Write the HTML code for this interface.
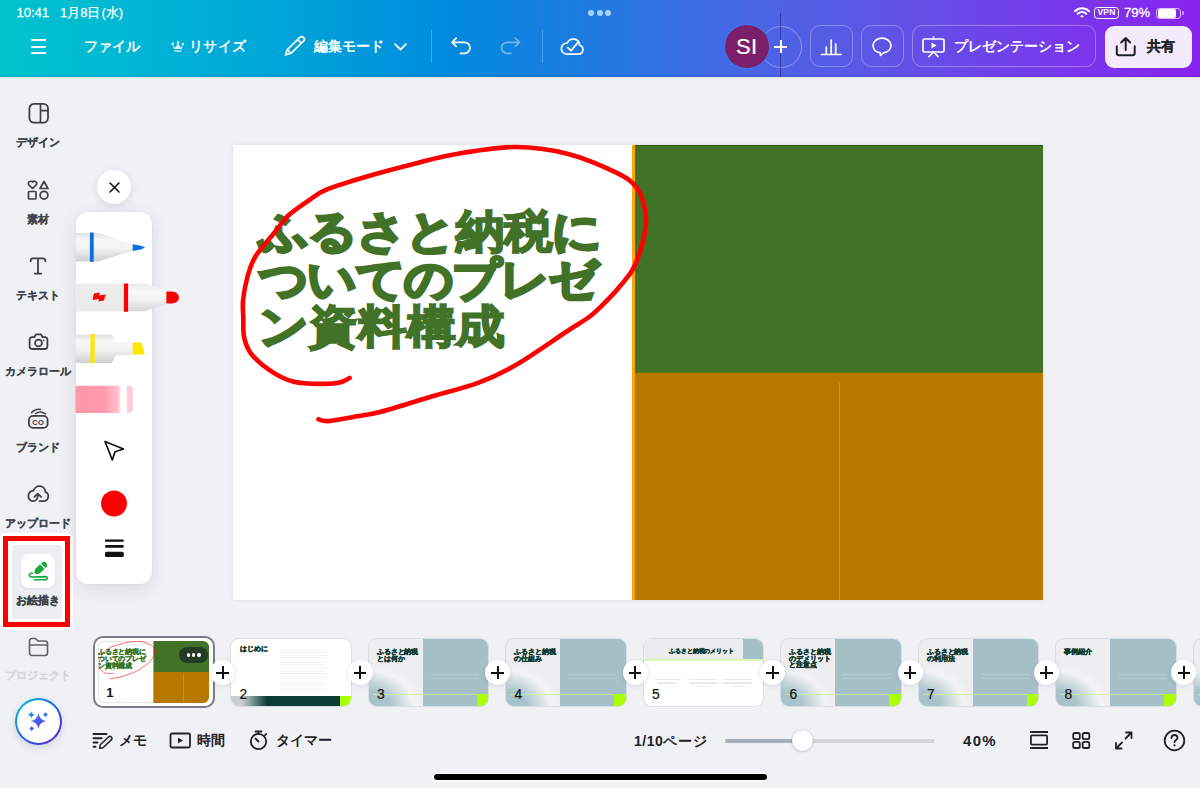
<!DOCTYPE html>
<html><head><meta charset="utf-8">
<style>
*{box-sizing:border-box;margin:0;padding:0}
html,body{width:1200px;height:788px;overflow:hidden}
body{position:relative;background:#f0f1f5;font-family:"Liberation Sans",sans-serif;color:#1f2328}
.a{position:absolute}
svg{position:absolute;overflow:visible}
#hdr{left:0;top:0;width:1200px;height:77px;box-shadow:inset 0 -2px 0 rgba(20,0,60,.07),0 1px 2px rgba(0,0,0,.05);background:linear-gradient(90deg,#00c4cc 0%,#00b4d6 12.5%,#00a2d8 25%,#008ade 37.5%,#2279e0 50%,#4866e4 62.5%,#6152e6 75%,#773aeb 87.5%,#8822ee 100%)}
.wt{position:absolute;color:#fff;font-weight:bold;white-space:nowrap;line-height:1}
.sb{position:absolute;left:0;width:76px;text-align:center;font-size:11px;font-weight:bold;color:#40454c;-webkit-text-stroke:.2px currentColor;white-space:nowrap;line-height:1}
.kj{-webkit-text-stroke:2px #427128}
.hbtn{position:absolute;top:25px;height:42px;border:1.6px solid rgba(255,255,255,.3);border-radius:10px}
</style></head><body>
<!-- HEADER -->
<div id="hdr" class="a">
  <div class="wt" style="left:16.5px;top:6px;font-size:13px;font-weight:normal;-webkit-text-stroke:.3px #fff">10:41</div>
  <div class="wt" style="left:60px;top:6px;font-size:13px;font-weight:normal;-webkit-text-stroke:.25px #fff">1月8日<span style="margin-left:1px">(水)</span></div>
  <!-- dots -->
  <div class="a" style="left:588px;top:9.5px;width:6.2px;height:6.2px;border-radius:50%;background:rgba(200,232,255,.8)"></div>
  <div class="a" style="left:596.9px;top:9.5px;width:6.2px;height:6.2px;border-radius:50%;background:rgba(200,232,255,.8)"></div>
  <div class="a" style="left:605.3px;top:9.5px;width:6.2px;height:6.2px;border-radius:50%;background:rgba(200,232,255,.8)"></div>
  <!-- status right -->
  <svg style="left:1074px;top:7px" width="16" height="11" viewBox="0 0 16 11"><path d="M1 4.2A10 10 0 0 1 15 4.2" fill="none" stroke="#fff" stroke-width="2" stroke-linecap="round"/><path d="M3.8 6.8A6 6 0 0 1 12.2 6.8" fill="none" stroke="#fff" stroke-width="2" stroke-linecap="round"/><path d="M6.2 9.2 8 10.8 9.8 9.2A2.6 2.6 0 0 0 6.2 9.2Z" fill="#fff"/></svg>
  <div class="a" style="left:1094px;top:7px;width:25px;height:12px;border:1.6px solid #fff;border-radius:3.5px;font-size:8.5px;font-weight:bold;color:#fff;text-align:center;line-height:9px;letter-spacing:.2px">VPN</div>
  <div class="wt" style="left:1124px;top:6px;font-size:13px;font-weight:normal;-webkit-text-stroke:.3px #fff">79%</div>
  <div class="a" style="left:1156px;top:7.5px;width:25px;height:11.5px;border:1.4px solid rgba(255,255,255,.7);border-radius:3.5px"></div>
  <div class="a" style="left:1158px;top:9px;width:17.5px;height:8.5px;background:#fff;border-radius:2px"></div>
  <div class="a" style="left:1182px;top:11px;width:2px;height:4px;background:rgba(255,255,255,.5);border-radius:0 1px 1px 0"></div>

  <!-- hamburger -->
  <div class="a" style="left:31px;top:39px;width:15px;height:2px;background:#fff"></div>
  <div class="a" style="left:31px;top:45.5px;width:15px;height:2px;background:#fff"></div>
  <div class="a" style="left:31px;top:52px;width:15px;height:2px;background:#fff"></div>
  <div class="wt" style="left:84px;top:39px;font-size:14px">ファイル</div>
  <svg style="left:166px;top:36px" width="24" height="22" viewBox="0 0 24 22"><circle cx="6.7" cy="7.9" r="1.3" fill="#d8f0ff"/><circle cx="12" cy="6.5" r="1.3" fill="#d8f0ff"/><circle cx="16.9" cy="8.1" r="1.3" fill="#d8f0ff"/><path d="M6.6 8.4 9.2 11.8 12 7 14.8 11.8 17 8.6 15.9 13H8.1Z" fill="#d8f0ff"/><rect x="8.4" y="14.3" width="7.2" height="1.5" fill="#c8e8fa"/></svg>
  <div class="wt" style="left:189px;top:39px;font-size:14px;letter-spacing:.4px">リサイズ</div>
  <svg style="left:280px;top:32px" width="30" height="30" viewBox="0 0 30 30"><g transform="translate(5.4 23) rotate(-43.9)"><path d="M0 0 5.2-2.6H22.6A2.6 2.6 0 0 1 22.6 2.6H5.2Z M5.2-2.6V2.6 M19.6-2.6V2.6" fill="none" stroke="#fff" stroke-width="1.7" stroke-linejoin="round"/></g></svg>
  <div class="wt" style="left:314px;top:39px;font-size:14px">編集モード</div>
  <svg style="left:394px;top:43px" width="13" height="8" viewBox="0 0 13 8"><path d="M1 1.2 6.5 6.5 12 1.2" fill="none" stroke="#fff" stroke-width="1.8" stroke-linecap="round" stroke-linejoin="round"/></svg>
  <div class="a" style="left:431px;top:30px;width:1px;height:33px;background:rgba(255,255,255,.25)"></div>
  <svg style="left:450px;top:37px" width="22" height="18" viewBox="0 0 22 18"><path d="M6.2 1.2 2 5.3 6.2 9.4 M2 5.3H14.5A5.5 5.5 0 0 1 14.5 16.3H10.5" fill="none" stroke="#fff" stroke-width="1.8" stroke-linecap="round" stroke-linejoin="round"/></svg>
  <svg style="left:499px;top:37px" width="22" height="18" viewBox="0 0 22 18"><path d="M16.3 1.2 20.5 5.3 16.3 9.4 M20.5 5.3H8A5.5 5.5 0 0 0 8 16.3H12" fill="none" stroke="rgba(255,255,255,.4)" stroke-width="1.8" stroke-linecap="round" stroke-linejoin="round"/></svg>
  <div class="a" style="left:542px;top:30px;width:1px;height:33px;background:rgba(255,255,255,.25)"></div>
  <svg style="left:559px;top:36px" width="26" height="20" viewBox="0 0 26 20"><path d="M7.6 18.2A5.6 5.6 0 0 1 8.3 7A6.4 6.4 0 0 1 20.6 9.2A4.6 4.6 0 0 1 19.6 18.2Z" fill="none" stroke="#fff" stroke-width="1.7" stroke-linejoin="round"/><path d="M8.8 11.6 12 14.6 19.6 5.6" fill="none" stroke="#fff" stroke-width="1.7" stroke-linecap="round" stroke-linejoin="round"/></svg>

  <!-- right -->
  <div class="a" style="left:760px;top:25.5px;width:42px;height:42px;border-radius:50%;border:1.5px solid rgba(255,255,255,.35)"></div>
  <div class="a" style="left:780.3px;top:13px;width:1px;height:64px;background:rgba(20,20,110,.5)"></div>
  <div class="a" style="left:725px;top:24.8px;width:43.5px;height:43.5px;border-radius:50%;background:#7b1f6b;box-shadow:0 0 0 1px #3d78f2;color:#fff;font-size:22px;-webkit-text-stroke:.2px #fff;text-align:center;line-height:43.5px;letter-spacing:.3px">SI</div>
  <div class="a" style="left:774px;top:45.6px;width:13px;height:2px;background:#fff"></div>
  <div class="a" style="left:779.5px;top:40.1px;width:2px;height:13px;background:#fff"></div>
  <div class="hbtn" style="left:810px;width:43px"></div>
  <svg style="left:820px;top:36px" width="22" height="20" viewBox="0 0 22 20"><path d="M1.5 18.5H21 M6.3 17.5V11 M11.2 17.5V4 M15.7 17.5V8" fill="none" stroke="#fff" stroke-width="1.7" stroke-linecap="round"/></svg>
  <div class="hbtn" style="left:861px;width:43px"></div>
  <svg style="left:871px;top:36px" width="22" height="21" viewBox="0 0 22 21"><path d="M11 2.2C5.9 2.2 2 5.5 2 9.6 2 13.3 5 16.3 9.2 16.9L9.4 19.4 12.6 16.9C16.9 16.3 20 13.3 20 9.6 20 5.5 16.1 2.2 11 2.2Z" fill="none" stroke="#fff" stroke-width="1.7" stroke-linejoin="round"/></svg>
  <div class="hbtn" style="left:912px;width:184px"></div>
  <svg style="left:921px;top:36px" width="25" height="22" viewBox="0 0 25 22"><rect x="2" y="3" width="21" height="13" rx="1.5" fill="none" stroke="#fff" stroke-width="1.7"/><path d="M12.5 1V3 M12.5 16 8 20.5 M12.5 16 17 20.5" fill="none" stroke="#fff" stroke-width="1.7" stroke-linecap="round"/><path d="M10.5 6.5V12.5L15.5 9.5Z" fill="#fff"/></svg>
  <div class="wt" style="left:954px;top:39px;font-size:14px">プレゼンテーション</div>
  <div class="a" style="left:1104.5px;top:25.5px;width:87.3px;height:42px;border-radius:9px;background:#f3ebfc"></div>
  <svg style="left:1114px;top:37px" width="23" height="20" viewBox="0 0 23 20"><path d="M11.7 13V1.2 M7.2 5.5 11.7 1 16.2 5.5 M2.8 9.3V16A2.2 2.2 0 0 0 5 18.2H18.5A2.2 2.2 0 0 0 20.7 16V9.3" fill="none" stroke="#1f2328" stroke-width="2" stroke-linecap="round" stroke-linejoin="round"/></svg>
  <div class="wt" style="left:1147px;top:39px;font-size:14px;color:#1f2328;-webkit-text-stroke:.3px #1f2328">共有</div>
</div>


<!-- SLIDE -->
<div class="a" style="left:233px;top:145px;width:810px;height:455px;background:#fff;box-shadow:0 0 1px rgba(0,0,0,.12),0 0 6px rgba(0,0,0,.05)"></div>
<div class="a" style="left:632px;top:145px;width:3px;height:455px;background:#ffa500"></div>
<div class="a" style="left:635px;top:145px;width:408px;height:227px;background:#427128;border-top:1.5px solid #1e6404"></div>
<div class="a" style="left:635px;top:371.5px;width:408px;height:1.2px;background:#5e7418"></div>
<div class="a" style="left:635px;top:372.7px;width:408px;height:227.3px;background:#b87800"></div>
<div class="a" style="left:838.5px;top:383px;width:1.5px;height:217px;background:#c99434"></div>
<div class="a" id="ttl" style="left:259px;top:208px;font-size:45px;line-height:47.5px;font-weight:bold;color:#427128;-webkit-text-stroke:3px #427128;white-space:nowrap;transform:scaleX(1.08);transform-origin:0 0"><div style="letter-spacing:-.5px">ふるさと<span class="kj">納税</span>に</div><div style="letter-spacing:-1.3px">ついてのプレゼ</div><div style="letter-spacing:.3px">ン<span class="kj">資料構成</span></div></div>
<svg style="left:0;top:0" width="1200" height="788" viewBox="0 0 1200 788"><path d="M318.4 419.3C320.1 419.6 322.9 421.5 328.5 421.1C334.1 420.8 343.7 418.7 352.3 417.2C360.9 415.7 367.6 415.2 380.0 412.0C392.4 408.8 410.4 402.9 426.7 398.0C443.0 393.1 463.2 388.2 478.0 382.8C492.8 377.4 500.5 373.9 515.3 365.3C530.1 356.8 554.2 339.7 566.7 331.5C579.2 323.3 583.2 321.6 590.0 316.3C596.8 311.1 602.3 305.2 607.5 300.0C612.7 294.8 616.5 290.7 621.0 285.0C625.5 279.3 630.5 274.8 634.5 266.0C638.5 257.2 643.2 241.7 645.0 232.3C646.8 222.9 646.4 217.3 645.0 209.8C643.6 202.3 641.3 193.6 636.4 187.4C631.5 181.2 627.3 178.0 615.8 172.4C604.3 166.8 584.0 157.9 567.2 153.7C550.4 149.5 533.5 146.9 514.8 147.0C496.1 147.1 471.9 151.4 455.0 154.2C438.1 157.0 428.3 160.3 413.6 164.0C398.9 167.7 381.6 172.2 367.0 176.5C352.4 180.8 336.1 185.6 326.3 189.7C316.5 193.8 314.4 196.6 308.0 201.0C301.6 205.4 293.2 210.9 287.8 216.0C282.4 221.1 281.0 224.5 275.6 231.3C270.2 238.1 260.0 248.9 255.3 256.7C250.6 264.5 249.2 270.8 247.2 278.0C245.2 285.2 243.8 293.4 243.1 300.0C242.4 306.6 243.1 311.2 243.3 317.5C243.5 323.8 242.8 331.6 244.2 337.7C245.6 343.8 246.9 348.5 251.5 354.2C256.1 359.9 264.7 367.0 271.7 371.6C278.7 376.2 285.1 379.6 293.7 381.7C302.2 383.8 315.4 383.8 323.0 383.9C330.6 384.0 335.1 383.6 339.5 382.6C343.9 381.6 347.9 378.8 349.6 378.0" fill="none" stroke="#fe0000" stroke-width="4.6" stroke-linecap="round" stroke-linejoin="round"/></svg>
<!-- SIDEBAR -->
<svg style="left:27px;top:102px" width="23" height="22" viewBox="0 0 23 22"><rect x="2.4" y="1.9" width="18.6" height="18.8" rx="4.6" fill="none" stroke="#3b4047" stroke-width="1.8"/><path d="M13.5 1.9V20.7 M13.5 8.6H21" fill="none" stroke="#3b4047" stroke-width="1.7"/></svg>
<div class="sb" style="top:137px">デザイン</div>
<svg style="left:27px;top:180px" width="23" height="20" viewBox="0 0 23 20"><path d="M5.5 8.5 1.8 4.8a2.2 2.2 0 0 1 3.7-2.6 2.2 2.2 0 0 1 3.7 2.6Z" fill="none" stroke="#3b4047" stroke-width="1.7" stroke-linejoin="round"/><path d="M17 1.5 21 8.5H13Z" fill="none" stroke="#3b4047" stroke-width="1.7" stroke-linejoin="round"/><rect x="1.5" y="11.5" width="7.5" height="7.5" rx="1" fill="none" stroke="#3b4047" stroke-width="1.7"/><circle cx="17" cy="15.2" r="3.9" fill="none" stroke="#3b4047" stroke-width="1.7"/></svg>
<div class="sb" style="top:214px">素材</div>
<svg style="left:28px;top:256px" width="20" height="20" viewBox="0 0 20 20"><path d="M2.6 5.2C2.6 3 3.2 2.4 5 2.4H15C16.8 2.4 17.4 3 17.4 5.2 M10 2.4V17.6 M6.8 17.6H13.2" fill="none" stroke="#3b4047" stroke-width="1.8" stroke-linecap="round" stroke-linejoin="round"/></svg>
<div class="sb" style="top:290px">テキスト</div>
<svg style="left:27px;top:332px" width="23" height="20" viewBox="0 0 23 20"><path d="M5 5.2H7.3L9 2.4H14L15.7 5.2H18A2.4 2.4 0 0 1 20.4 7.6V14.6A2.4 2.4 0 0 1 18 17H5A2.4 2.4 0 0 1 2.6 14.6V7.6A2.4 2.4 0 0 1 5 5.2Z" fill="none" stroke="#3b4047" stroke-width="1.8" stroke-linejoin="round"/><circle cx="11.5" cy="11" r="3.4" fill="none" stroke="#3b4047" stroke-width="1.8"/><circle cx="16.6" cy="8.3" r=".9" fill="#3b4047"/></svg>
<div class="sb" style="top:366px">カメラロール</div>
<svg style="left:20px;top:400px" width="36" height="36" viewBox="20 400 36 36"><rect x="28.9" y="415.8" width="18.7" height="12.1" rx="4.2" fill="none" stroke="#3b4047" stroke-width="1.8"/><path d="M31.6 412.6Q35.5 408.4 40.6 409.4M35.6 413.6Q40.6 410.4 45.4 413.9" fill="none" stroke="#3b4047" stroke-width="1.5" stroke-linecap="round"/><text x="38.3" y="424.9" text-anchor="middle" font-family="Liberation Sans" font-weight="bold" font-size="7.6" fill="#3b4047" letter-spacing=".3">CO</text></svg>
<div class="sb" style="top:442px">ブランド</div>
<svg style="left:19px;top:475.5px" width="36" height="36" viewBox="20 476 36 36"><path d="M40.6 501.2H44.4A4.8 4.8 0 0 0 46.4 492A6 6 0 0 0 34.6 490.6A5.4 5.4 0 0 0 33.4 501.2A5.2 5.2 0 0 0 38.7 496.2V493.8M35.4 496.9 38.7 493.6 42.1 496.9" fill="none" stroke="#3b4047" stroke-width="1.8" stroke-linecap="round" stroke-linejoin="round"/></svg>
<div class="sb" style="top:518px">アップロード</div>
<!-- selected draw -->

<div class="a" style="left:0;top:533px;width:73px;height:97px;background:#fff;border-radius:6px"></div><div class="a" style="left:3px;top:536px;width:67px;height:91px;border:5.2px solid #fe0000;background:#fff"></div><div class="a" style="left:12px;top:545px;width:50px;height:74px;border-radius:4px;background:#eceef2"></div>
<div class="a" style="left:21px;top:553.5px;width:34px;height:34px;border-radius:8px;background:#fff;box-shadow:0 1px 3px rgba(0,0,0,.08)"></div>
<svg style="left:22px;top:555px" width="32" height="32" viewBox="0 0 32 32"><g transform="translate(12.6 18.7) rotate(-42.7)"><path d="M0.3 0C0.8-1.5 3-3.2 5-3.2H10.5V3.2H5C3 3.2 0.8 1.5 0.3 0Z" fill="#18a83c"/><path d="M11.8-3.2H12.6A3.2 3.2 0 0 1 12.6 3.2H11.8Z" fill="#18a83c"/></g><path d="M10.4 18.3C8 17.8 6.8 19.2 7.3 20.6C7.7 21.6 9 22 10.5 22L23.6 21.6A1.6 1.6 0 0 1 23.6 24.8H12.6" fill="none" stroke="#18a83c" stroke-width="1.6" stroke-linecap="round" stroke-linejoin="round"/></svg>
<div class="sb" style="top:595px;color:#3b4047">お絵描き</div>
<svg style="left:28px;top:637px" width="21" height="20" viewBox="0 0 21 20"><path d="M1.5 4A2.5 2.5 0 0 1 4 1.5H7.5L10 4H17A2.5 2.5 0 0 1 19.5 6.5V16A2.5 2.5 0 0 1 17 18.5H4A2.5 2.5 0 0 1 1.5 16Z M1.5 8H19.5" fill="none" stroke="#5f646b" stroke-width="1.7" stroke-linejoin="round"/></svg>
<div class="sb" style="top:670px;color:#d5d8dd">プロジェクト</div>
<!-- magic -->
<div class="a" style="left:14.5px;top:697.5px;width:47.5px;height:47.5px;border-radius:50%;background:linear-gradient(135deg,#00b4d4 10%,#1f5fe6 55%,#5a22e0 90%);box-shadow:0 3px 8px rgba(0,0,0,.12)"></div>
<div class="a" style="left:16.75px;top:699.75px;width:43px;height:43px;border-radius:50%;background:#fff"></div>
<svg style="left:10px;top:692px" width="56" height="56" viewBox="0 0 56 56"><defs><linearGradient id="mg" x1="0" y1="0" x2="1" y2="1"><stop offset="0" stop-color="#3c7ee6"/><stop offset="1" stop-color="#5a3cf0"/></linearGradient><linearGradient id="mg2" x1="0" y1="0" x2="1" y2="1"><stop offset="0" stop-color="#0a9bc8"/><stop offset="1" stop-color="#2a7ee0"/></linearGradient></defs><path d="M28.4 21.3Q29.49 28.01 36.199999999999996 29.1Q29.49 30.19 28.4 36.9Q27.31 30.19 20.599999999999998 29.1Q27.31 28.01 28.4 21.3Z" fill="url(#mg)"/><path d="M21.3 19.0Q21.74 22.26 25.0 22.7Q21.74 23.14 21.3 26.4Q20.86 23.14 17.6 22.7Q20.86 22.26 21.3 19.0Z" fill="url(#mg2)"/><path d="M35.5 20.200000000000003Q36.58 21.52 37.9 22.6Q36.58 23.68 35.5 25.0Q34.42 23.68 33.1 22.6Q34.42 21.52 35.5 20.200000000000003Z" fill="#2f6fe6"/><path d="M21.7 34.2Q22.78 35.52 24.099999999999998 36.6Q22.78 37.68 21.7 39.0Q20.62 37.68 19.3 36.6Q20.62 35.52 21.7 34.2Z" fill="#3566ea"/></svg>

<!-- THUMBS -->
<div class="a" style="left:93px;top:636px;width:121.5px;height:72px;border:2px solid #787d85;border-radius:10px;background:#fff"></div>
<div class="a" style="left:97.75px;top:641.25px;width:111px;height:62px;border-radius:6px;overflow:hidden;background:#fff;box-shadow:inset 0 0 0 .8px #dadde3">
<div class="a" style="left:55.25px;top:0;width:56px;height:31px;background:#427128"></div>
<div class="a" style="left:55.25px;top:30.5px;width:56px;height:32px;background:#b87800"></div>
<div class="a" style="left:85.25px;top:32px;width:.5px;height:30px;background:#c0903a"></div>
<div class="a" style="left:54.75px;top:0;width:.6px;height:62px;background:#e0a030"></div>
<div class="a" style="left:0;top:6.5px;font-size:6.6px;line-height:7.2px;font-weight:bold;color:#33741f;-webkit-text-stroke:.3px #33741f;white-space:nowrap;letter-spacing:-.1px">ふるさと納税に<br>ついてのプレゼ<br>ン資料構成</div>
<svg style="left:0;top:0" width="111" height="62" viewBox="0 0 111 62"><g transform="translate(-31.85 -19.82) scale(0.1367)"><path d="M318.4 419.3C320.1 419.6 322.9 421.5 328.5 421.1C334.1 420.8 343.7 418.7 352.3 417.2C360.9 415.7 367.6 415.2 380.0 412.0C392.4 408.8 410.4 402.9 426.7 398.0C443.0 393.1 463.2 388.2 478.0 382.8C492.8 377.4 500.5 373.9 515.3 365.3C530.1 356.8 554.2 339.7 566.7 331.5C579.2 323.3 583.2 321.6 590.0 316.3C596.8 311.1 602.3 305.2 607.5 300.0C612.7 294.8 616.5 290.7 621.0 285.0C625.5 279.3 630.5 274.8 634.5 266.0C638.5 257.2 643.2 241.7 645.0 232.3C646.8 222.9 646.4 217.3 645.0 209.8C643.6 202.3 641.3 193.6 636.4 187.4C631.5 181.2 627.3 178.0 615.8 172.4C604.3 166.8 584.0 157.9 567.2 153.7C550.4 149.5 533.5 146.9 514.8 147.0C496.1 147.1 471.9 151.4 455.0 154.2C438.1 157.0 428.3 160.3 413.6 164.0C398.9 167.7 381.6 172.2 367.0 176.5C352.4 180.8 336.1 185.6 326.3 189.7C316.5 193.8 314.4 196.6 308.0 201.0C301.6 205.4 293.2 210.9 287.8 216.0C282.4 221.1 281.0 224.5 275.6 231.3C270.2 238.1 260.0 248.9 255.3 256.7C250.6 264.5 249.2 270.8 247.2 278.0C245.2 285.2 243.8 293.4 243.1 300.0C242.4 306.6 243.1 311.2 243.3 317.5C243.5 323.8 242.8 331.6 244.2 337.7C245.6 343.8 246.9 348.5 251.5 354.2C256.1 359.9 264.7 367.0 271.7 371.6C278.7 376.2 285.1 379.6 293.7 381.7C302.2 383.8 315.4 383.8 323.0 383.9C330.6 384.0 335.1 383.6 339.5 382.6C343.9 381.6 347.9 378.8 349.6 378.0" fill="none" stroke="#fe0000" stroke-opacity=".7" stroke-width="6"/></g></svg>
<div class="a" style="left:81.25px;top:5.6px;width:29px;height:16.25px;border-radius:8px;background:#233b25"></div>
<div class="a" style="left:88.75px;top:11.9px;width:3.6px;height:3.6px;border-radius:50%;background:#fff"></div>
<div class="a" style="left:94px;top:11.9px;width:3.6px;height:3.6px;border-radius:50%;background:#fff"></div>
<div class="a" style="left:99.25px;top:11.9px;width:3.6px;height:3.6px;border-radius:50%;background:#fff"></div>
<div class="a" style="left:8.5px;top:45px;font-size:13px;font-weight:bold;color:#111;line-height:1">1</div>
</div>
<div class="a" style="left:231.25px;top:638.75px;width:119.5px;height:67.25px;border-radius:8px;overflow:hidden;background:#fff;box-shadow:0 0 0 1px rgba(200,205,215,.55)">
<div class="a" style="left:8.5px;top:7.5px;font-size:6.6px;font-weight:bold;color:#0d3a30;-webkit-text-stroke:.35px #0d3a30;white-space:nowrap;line-height:1">はじめに</div>
<div class="a" style="left:49px;top:11px;width:46px;height:18px;background:repeating-linear-gradient(180deg,rgba(150,155,160,.11) 0 .8px,transparent .8px 2.4px)"></div>
<div class="a" style="left:49px;top:32px;width:46px;height:22px;background:repeating-linear-gradient(180deg,rgba(150,155,160,.11) 0 .8px,transparent .8px 2.4px)"></div>
<div class="a" style="left:0;top:56.75px;width:109px;height:11px;background:linear-gradient(90deg,#c9d1d0 0%,#c9d1d0 10%,#0b3d36 33%,#0b3d36 100%)"></div>
<div class="a" style="left:108.75px;top:56.75px;width:11px;height:11px;background:#aaff00"></div>
<div class="a" style="left:8.3px;top:49.2px;font-size:13.8px;color:#111;line-height:1;-webkit-text-stroke:.2px #111">2</div>
</div>
<div class="a" style="left:368.75px;top:638.75px;width:119.5px;height:67.25px;border-radius:8px;overflow:hidden;background:#eeeef1;box-shadow:0 0 0 1px rgba(200,205,215,.55)"><div class="a" style="left:0;top:0;width:54px;height:68px;background:radial-gradient(ellipse 54px 44px at 0% 100%,#a5c1c7 0%,#a9c4ca 38%,#d2dde0 62%,#f2f3f5 82%,rgba(238,238,241,0) 100%)"></div><div class="a" style="left:53.75px;top:0;width:66px;height:68px;background:#a5c1c7"></div><div class="a" style="left:62px;top:35px;width:48px;height:8px;background:repeating-linear-gradient(180deg,rgba(255,255,255,.16) 0 .8px,transparent .8px 4px)"></div><div class="a" style="left:4px;top:55.5px;width:104px;height:1px;background:rgba(205,240,150,.75)"></div><div class="a" style="left:108px;top:55.25px;width:12px;height:12px;background:#aaff00;border-bottom-right-radius:7px"></div><div class="a" style="left:8.2px;top:10.5px;font-size:6.5px;line-height:6.3px;letter-spacing:-.12px;font-weight:bold;color:#0d3a30;-webkit-text-stroke:.4px #0d3a30;white-space:nowrap">ふるさと納税<br>とは何か</div><div class="a" style="left:8.3px;top:49.2px;font-size:13.8px;color:#111;line-height:1;-webkit-text-stroke:.2px #111">3</div></div>
<div class="a" style="left:506.25px;top:638.75px;width:119.5px;height:67.25px;border-radius:8px;overflow:hidden;background:#eeeef1;box-shadow:0 0 0 1px rgba(200,205,215,.55)"><div class="a" style="left:0;top:0;width:54px;height:68px;background:radial-gradient(ellipse 54px 44px at 0% 100%,#a5c1c7 0%,#a9c4ca 38%,#d2dde0 62%,#f2f3f5 82%,rgba(238,238,241,0) 100%)"></div><div class="a" style="left:53.75px;top:0;width:66px;height:68px;background:#a5c1c7"></div><div class="a" style="left:62px;top:35px;width:48px;height:8px;background:repeating-linear-gradient(180deg,rgba(255,255,255,.16) 0 .8px,transparent .8px 4px)"></div><div class="a" style="left:4px;top:55.5px;width:104px;height:1px;background:rgba(205,240,150,.75)"></div><div class="a" style="left:108px;top:55.25px;width:12px;height:12px;background:#aaff00;border-bottom-right-radius:7px"></div><div class="a" style="left:8.2px;top:10.5px;font-size:6.5px;line-height:6.3px;letter-spacing:-.12px;font-weight:bold;color:#0d3a30;-webkit-text-stroke:.4px #0d3a30;white-space:nowrap">ふるさと納税<br>の仕組み</div><div class="a" style="left:8.3px;top:49.2px;font-size:13.8px;color:#111;line-height:1;-webkit-text-stroke:.2px #111">4</div></div>
<div class="a" style="left:643.75px;top:638.75px;width:119.5px;height:67.25px;border-radius:8px;overflow:hidden;background:#fff;box-shadow:0 0 0 1px rgba(200,205,215,.55)">
<div class="a" style="left:0;top:0;width:120px;height:20.6px;background:#ececee"></div>
<div class="a" style="left:99.25px;top:0;width:21px;height:20.6px;background:#a5c1c7"></div>
<div class="a" style="left:0;top:20.6px;width:120px;height:1.2px;background:#dff5b5"></div>
<div class="a" style="left:25.5px;top:9px;font-size:6.2px;letter-spacing:-.15px;font-weight:bold;color:#0d3a30;-webkit-text-stroke:.35px #0d3a30;white-space:nowrap;line-height:1">ふるさと納税のメリット</div>
<div class="a" style="left:10.25px;top:40px;width:27px;height:1.4px;background:rgba(140,150,150,.2)"></div><div class="a" style="left:13.25px;top:43.5px;width:19px;height:1.4px;background:rgba(140,150,150,.2)"></div><div class="a" style="left:45.25px;top:40px;width:28px;height:1.4px;background:rgba(140,150,150,.2)"></div><div class="a" style="left:45.25px;top:43.5px;width:28px;height:1.4px;background:rgba(140,150,150,.2)"></div><div class="a" style="left:53.25px;top:47px;width:13px;height:1.4px;background:rgba(140,150,150,.2)"></div><div class="a" style="left:79.25px;top:40px;width:29px;height:1.4px;background:rgba(140,150,150,.2)"></div><div class="a" style="left:79.25px;top:43.5px;width:29px;height:1.4px;background:rgba(140,150,150,.2)"></div><div class="a" style="left:87.25px;top:47px;width:14px;height:1.4px;background:rgba(140,150,150,.2)"></div><div class="a" style="left:8.3px;top:49.2px;font-size:13.8px;color:#111;line-height:1;-webkit-text-stroke:.2px #111">5</div>
</div>
<div class="a" style="left:781.25px;top:638.75px;width:119.5px;height:67.25px;border-radius:8px;overflow:hidden;background:#eeeef1;box-shadow:0 0 0 1px rgba(200,205,215,.55)"><div class="a" style="left:0;top:0;width:54px;height:68px;background:radial-gradient(ellipse 54px 44px at 0% 100%,#a5c1c7 0%,#a9c4ca 38%,#d2dde0 62%,#f2f3f5 82%,rgba(238,238,241,0) 100%)"></div><div class="a" style="left:53.75px;top:0;width:66px;height:68px;background:#a5c1c7"></div><div class="a" style="left:62px;top:35px;width:48px;height:8px;background:repeating-linear-gradient(180deg,rgba(255,255,255,.16) 0 .8px,transparent .8px 4px)"></div><div class="a" style="left:4px;top:55.5px;width:104px;height:1px;background:rgba(205,240,150,.75)"></div><div class="a" style="left:108px;top:55.25px;width:12px;height:12px;background:#aaff00;border-bottom-right-radius:7px"></div><div class="a" style="left:8.2px;top:10.5px;font-size:6.5px;line-height:6.3px;letter-spacing:-.12px;font-weight:bold;color:#0d3a30;-webkit-text-stroke:.4px #0d3a30;white-space:nowrap">ふるさと納税<br>のデメリット<br>と注意点</div><div class="a" style="left:8.3px;top:49.2px;font-size:13.8px;color:#111;line-height:1;-webkit-text-stroke:.2px #111">6</div></div>
<div class="a" style="left:918.75px;top:638.75px;width:119.5px;height:67.25px;border-radius:8px;overflow:hidden;background:#eeeef1;box-shadow:0 0 0 1px rgba(200,205,215,.55)"><div class="a" style="left:0;top:0;width:54px;height:68px;background:radial-gradient(ellipse 54px 44px at 0% 100%,#a5c1c7 0%,#a9c4ca 38%,#d2dde0 62%,#f2f3f5 82%,rgba(238,238,241,0) 100%)"></div><div class="a" style="left:53.75px;top:0;width:66px;height:68px;background:#a5c1c7"></div><div class="a" style="left:62px;top:35px;width:48px;height:8px;background:repeating-linear-gradient(180deg,rgba(255,255,255,.16) 0 .8px,transparent .8px 4px)"></div><div class="a" style="left:4px;top:55.5px;width:104px;height:1px;background:rgba(205,240,150,.75)"></div><div class="a" style="left:108px;top:55.25px;width:12px;height:12px;background:#aaff00;border-bottom-right-radius:7px"></div><div class="a" style="left:8.2px;top:10.5px;font-size:6.5px;line-height:6.3px;letter-spacing:-.12px;font-weight:bold;color:#0d3a30;-webkit-text-stroke:.4px #0d3a30;white-space:nowrap">ふるさと納税<br>の利用法</div><div class="a" style="left:8.3px;top:49.2px;font-size:13.8px;color:#111;line-height:1;-webkit-text-stroke:.2px #111">7</div></div>
<div class="a" style="left:1056.25px;top:638.75px;width:119.5px;height:67.25px;border-radius:8px;overflow:hidden;background:#eeeef1;box-shadow:0 0 0 1px rgba(200,205,215,.55)"><div class="a" style="left:0;top:0;width:54px;height:68px;background:radial-gradient(ellipse 54px 44px at 0% 100%,#a5c1c7 0%,#a9c4ca 38%,#d2dde0 62%,#f2f3f5 82%,rgba(238,238,241,0) 100%)"></div><div class="a" style="left:53.75px;top:0;width:66px;height:68px;background:#a5c1c7"></div><div class="a" style="left:62px;top:35px;width:48px;height:8px;background:repeating-linear-gradient(180deg,rgba(255,255,255,.16) 0 .8px,transparent .8px 4px)"></div><div class="a" style="left:4px;top:55.5px;width:104px;height:1px;background:rgba(205,240,150,.75)"></div><div class="a" style="left:108px;top:55.25px;width:12px;height:12px;background:#aaff00;border-bottom-right-radius:7px"></div><div class="a" style="left:8.2px;top:10.5px;font-size:6.5px;line-height:6.3px;letter-spacing:-.12px;font-weight:bold;color:#0d3a30;-webkit-text-stroke:.4px #0d3a30;white-space:nowrap">事例紹介</div><div class="a" style="left:8.3px;top:49.2px;font-size:13.8px;color:#111;line-height:1;-webkit-text-stroke:.2px #111">8</div></div>
<div class="a" style="left:1193.75px;top:638.75px;width:119.5px;height:67.25px;border-radius:8px;overflow:hidden;background:#eeeef1;box-shadow:0 0 0 1px rgba(200,205,215,.55)"><div class="a" style="left:0;top:0;width:54px;height:68px;background:radial-gradient(ellipse 54px 44px at 0% 100%,#a5c1c7 0%,#a9c4ca 38%,#d2dde0 62%,#f2f3f5 82%,rgba(238,238,241,0) 100%)"></div><div class="a" style="left:53.75px;top:0;width:66px;height:68px;background:#a5c1c7"></div><div class="a" style="left:62px;top:35px;width:48px;height:8px;background:repeating-linear-gradient(180deg,rgba(255,255,255,.16) 0 .8px,transparent .8px 4px)"></div><div class="a" style="left:4px;top:55.5px;width:104px;height:1px;background:rgba(205,240,150,.75)"></div><div class="a" style="left:108px;top:55.25px;width:12px;height:12px;background:#aaff00;border-bottom-right-radius:7px"></div><div class="a" style="left:8.2px;top:10.5px;font-size:6.5px;line-height:6.3px;letter-spacing:-.12px;font-weight:bold;color:#0d3a30;-webkit-text-stroke:.4px #0d3a30;white-space:nowrap"></div><div class="a" style="left:8.3px;top:49.2px;font-size:13.8px;color:#111;line-height:1;-webkit-text-stroke:.2px #111"></div></div>
<div class="a" style="left:210.10px;top:660px;width:25px;height:25px;border-radius:50%;background:#fff;box-shadow:0 1px 5px rgba(30,40,80,.13)"></div>
<div class="a" style="left:216.35px;top:671.5px;width:12.5px;height:2px;background:#111"></div>
<div class="a" style="left:221.60px;top:666.25px;width:2px;height:12.5px;background:#111"></div>
<div class="a" style="left:347.60px;top:660px;width:25px;height:25px;border-radius:50%;background:#fff;box-shadow:0 1px 5px rgba(30,40,80,.13)"></div>
<div class="a" style="left:353.85px;top:671.5px;width:12.5px;height:2px;background:#111"></div>
<div class="a" style="left:359.10px;top:666.25px;width:2px;height:12.5px;background:#111"></div>
<div class="a" style="left:485.10px;top:660px;width:25px;height:25px;border-radius:50%;background:#fff;box-shadow:0 1px 5px rgba(30,40,80,.13)"></div>
<div class="a" style="left:491.35px;top:671.5px;width:12.5px;height:2px;background:#111"></div>
<div class="a" style="left:496.60px;top:666.25px;width:2px;height:12.5px;background:#111"></div>
<div class="a" style="left:622.60px;top:660px;width:25px;height:25px;border-radius:50%;background:#fff;box-shadow:0 1px 5px rgba(30,40,80,.13)"></div>
<div class="a" style="left:628.85px;top:671.5px;width:12.5px;height:2px;background:#111"></div>
<div class="a" style="left:634.10px;top:666.25px;width:2px;height:12.5px;background:#111"></div>
<div class="a" style="left:760.10px;top:660px;width:25px;height:25px;border-radius:50%;background:#fff;box-shadow:0 1px 5px rgba(30,40,80,.13)"></div>
<div class="a" style="left:766.35px;top:671.5px;width:12.5px;height:2px;background:#111"></div>
<div class="a" style="left:771.60px;top:666.25px;width:2px;height:12.5px;background:#111"></div>
<div class="a" style="left:897.60px;top:660px;width:25px;height:25px;border-radius:50%;background:#fff;box-shadow:0 1px 5px rgba(30,40,80,.13)"></div>
<div class="a" style="left:903.85px;top:671.5px;width:12.5px;height:2px;background:#111"></div>
<div class="a" style="left:909.10px;top:666.25px;width:2px;height:12.5px;background:#111"></div>
<div class="a" style="left:1033.90px;top:660px;width:25px;height:25px;border-radius:50%;background:#fff;box-shadow:0 1px 5px rgba(30,40,80,.13)"></div>
<div class="a" style="left:1040.15px;top:671.5px;width:12.5px;height:2px;background:#111"></div>
<div class="a" style="left:1045.40px;top:666.25px;width:2px;height:12.5px;background:#111"></div>
<div class="a" style="left:1171.40px;top:660px;width:25px;height:25px;border-radius:50%;background:#fff;box-shadow:0 1px 5px rgba(30,40,80,.13)"></div>
<div class="a" style="left:1177.65px;top:671.5px;width:12.5px;height:2px;background:#111"></div>
<div class="a" style="left:1182.90px;top:666.25px;width:2px;height:12.5px;background:#111"></div>
<!-- BOTTOM BAR -->
<svg style="left:92px;top:732px" width="22" height="18" viewBox="0 0 22 18"><path d="M1.5 2H14.5M1.5 6.25H9.75M1.5 10.5H5.5M1.5 14.75H3.5" fill="none" stroke="#1f2328" stroke-width="1.9" stroke-linecap="round"/><g transform="translate(7.6 16.2) rotate(-43.7)"><path d="M0 0L2.8-2H14.2A2 2 0 0 1 14.2 2H2.8Z" fill="none" stroke="#1f2328" stroke-width="1.5" stroke-linejoin="round"/></g></svg>
<div class="a" style="left:119px;top:733px;font-size:14px;font-weight:bold;color:#1f2328;line-height:1;white-space:nowrap">メモ</div>
<svg style="left:168.5px;top:732px" width="23" height="17" viewBox="0 0 23 17"><rect x="1.5" y="1.5" width="19.5" height="14" rx="1.5" fill="none" stroke="#1f2328" stroke-width="1.8"/><path d="M9 5.5V11.5L14 8.5Z" fill="#1f2328"/></svg>
<div class="a" style="left:197px;top:733px;font-size:14px;font-weight:bold;color:#1f2328;line-height:1;white-space:nowrap">時間</div>
<svg style="left:248.5px;top:729.5px" width="20" height="21" viewBox="0 0 20 21"><circle cx="9.5" cy="11.5" r="7.7" fill="none" stroke="#1f2328" stroke-width="1.8"/><path d="M6.5 1.5H12.5 M9.5 1.5V3.8 M9.5 11.5 6.5 8.5 M16 5.2 17.3 3.9" fill="none" stroke="#1f2328" stroke-width="1.8" stroke-linecap="round"/></svg>
<div class="a" style="left:276px;top:733px;font-size:14px;font-weight:bold;color:#1f2328;line-height:1;white-space:nowrap">タイマー</div>

<div class="a" style="left:634px;top:733.5px;font-size:14px;font-weight:bold;color:#1f2328;line-height:1;white-space:nowrap;letter-spacing:.55px">1/10ページ</div>
<div class="a" style="left:725px;top:739px;width:210px;height:3.5px;border-radius:2px;background:#d1d6dd"></div>
<div class="a" style="left:725px;top:739px;width:78px;height:3.5px;border-radius:2px;background:#a6aeb8"></div>
<div class="a" style="left:791.5px;top:730px;width:21px;height:21px;border-radius:50%;background:#fff;box-shadow:0 0 0 .8px rgba(0,0,0,.08),0 1px 3px rgba(0,0,0,.15)"></div>
<div class="a" style="left:963px;top:732.5px;font-size:15px;font-weight:bold;color:#1f2328;line-height:1;white-space:nowrap;letter-spacing:1.3px">40%</div>
<svg style="left:1029px;top:731px" width="20" height="18" viewBox="0 0 20 18"><path d="M1 1H19 M1 17H19" stroke="#1f2328" stroke-width="1.8"/><rect x="1.9" y="4.4" width="16.2" height="9.2" rx="1" fill="none" stroke="#1f2328" stroke-width="1.8"/></svg>
<svg style="left:1072px;top:732px" width="19" height="17" viewBox="0 0 19 17"><rect x="1.2" y="1" width="6.6" height="6.2" rx="1.6" fill="none" stroke="#1f2328" stroke-width="1.8"/><rect x="10.7" y="1" width="6.6" height="6.2" rx="1.6" fill="none" stroke="#1f2328" stroke-width="1.8"/><rect x="1.2" y="9.8" width="6.6" height="6.2" rx="1.6" fill="none" stroke="#1f2328" stroke-width="1.8"/><rect x="10.7" y="9.8" width="6.6" height="6.2" rx="1.6" fill="none" stroke="#1f2328" stroke-width="1.8"/></svg>
<svg style="left:1114px;top:731px" width="20" height="19" viewBox="0 0 20 19"><path d="M11.5 7.5 17.5 1.5 M12 1.5H17.5V7 M8 11.5 2 17.5 M2 12V17.5H7.5" fill="none" stroke="#1f2328" stroke-width="1.8" stroke-linecap="round" stroke-linejoin="round"/></svg>
<svg style="left:1163px;top:729px" width="23" height="23" viewBox="0 0 23 23"><circle cx="11.5" cy="11.5" r="9.8" fill="none" stroke="#1f2328" stroke-width="1.8"/><path d="M8.5 9A3 3 0 0 1 14.5 9C14.5 11 11.5 11.2 11.5 13.2" fill="none" stroke="#1f2328" stroke-width="1.8" stroke-linecap="round"/><circle cx="11.5" cy="16.3" r="1.1" fill="#1f2328"/></svg>
<div class="a" style="left:432px;top:772.5px;width:336px;height:9px;border-radius:5px;background:#fff"></div>
<div class="a" style="left:433.5px;top:774px;width:333px;height:6px;border-radius:3px;background:#000"></div>
<!-- DRAW PANEL -->
<div class="a" style="left:97px;top:170px;width:34px;height:34px;border-radius:50%;background:#fff;box-shadow:0 2px 8px rgba(30,40,80,.12)"></div>
<svg style="left:108.5px;top:181.5px" width="11" height="11" viewBox="0 0 11 11"><path d="M1 1 10 10 M10 1 1 10" stroke="#111" stroke-width="1.6" stroke-linecap="round"/></svg>
<div class="a" style="left:75.5px;top:212px;width:76.5px;height:372px;border-radius:12px;background:#fff;box-shadow:0 4px 18px rgba(30,40,80,.11),0 0 2px rgba(30,40,80,.08)"></div>
<svg style="left:0;top:0" width="200" height="600" viewBox="0 0 200 600">
<defs>
<linearGradient id="cyl" x1="0" y1="0" x2="0" y2="1"><stop offset="0" stop-color="#e2e2e2"/><stop offset=".25" stop-color="#f7f7f7"/><stop offset=".55" stop-color="#f2f2f2"/><stop offset="1" stop-color="#cfcfcf"/></linearGradient>
<linearGradient id="cyl2" x1="0" y1="0" x2="0" y2="1"><stop offset="0" stop-color="#eaeaea"/><stop offset=".3" stop-color="#fafafa"/><stop offset=".6" stop-color="#f0f0f0"/><stop offset="1" stop-color="#d6d6d6"/></linearGradient>
<linearGradient id="pink" x1="0" y1="0" x2="1" y2="0"><stop offset="0" stop-color="#ff97a9"/><stop offset=".5" stop-color="#ff9aab"/><stop offset=".75" stop-color="#ffc5d0"/><stop offset=".8" stop-color="#fff"/><stop offset=".89" stop-color="#fff"/><stop offset=".9" stop-color="#ffd0da"/><stop offset="1" stop-color="#ffc6d1"/></linearGradient>
</defs>
<!-- pen1 -->
<path d="M75.5 233H98.3L132.7 244.3V250.9L98.3 261.5H75.5Z" fill="url(#cyl)"/>
<rect x="89.9" y="232.5" width="3.8" height="29.3" fill="#0b6fde"/>
<path d="M132.7 244.2 141 245.8 145.2 247.6 141 249.4 132.7 251Z" fill="#0b6fde"/>
<!-- pen2 -->
<path d="M75.5 283.8H144.7L166.4 290.7V304L144.7 311.2H75.5Z" fill="url(#cyl2)"/>
<rect x="75.5" y="283.8" width="48" height="27.4" fill="#ececec"/>
<rect x="123.9" y="283.5" width="4.2" height="28.3" fill="#fe0000"/>
<path d="M166.4 291.5H172a7 6 0 0 1 0 12H166.4Z" fill="#fe0000"/>
<path d="M94 293.5 100 292.5 99 295.5 105.5 294.5 104 300.5 98.5 301.5 99 299 92.5 300Z" fill="#fe0000"/>
<!-- highlighter -->
<path d="M75.5 334.4H111C113.5 334.4 114.5 342 117 342H132.7V355H117C114.5 355 113.5 363 111 363H75.5Z" fill="url(#cyl)"/>
<rect x="90.5" y="334" width="4.2" height="29.2" fill="#ffe600"/>
<path d="M132.7 342.5H141.6L144.7 354.5H132.7Z" fill="#ffe600"/>
<!-- eraser -->
<path d="M75.5 385.8H128.7A4 4 0 0 1 132.7 389.8V409A4 4 0 0 1 128.7 413H75.5Z" fill="url(#pink)"/>
<!-- cursor -->
<path d="M105 441.5 123.5 449 115 451.8 112.3 460Z" fill="none" stroke="#111" stroke-width="1.7" stroke-linejoin="round"/>
<circle cx="114" cy="503.5" r="13" fill="#fe0000"/>
<rect x="105" y="539.6" width="18.8" height="2.1" rx=".6" fill="#111"/>
<rect x="105" y="545" width="18.8" height="2.8" rx="1.2" fill="#111"/>
<rect x="105" y="551.8" width="18.8" height="5.2" rx="1.6" fill="#111"/>
</svg>
</body></html>
